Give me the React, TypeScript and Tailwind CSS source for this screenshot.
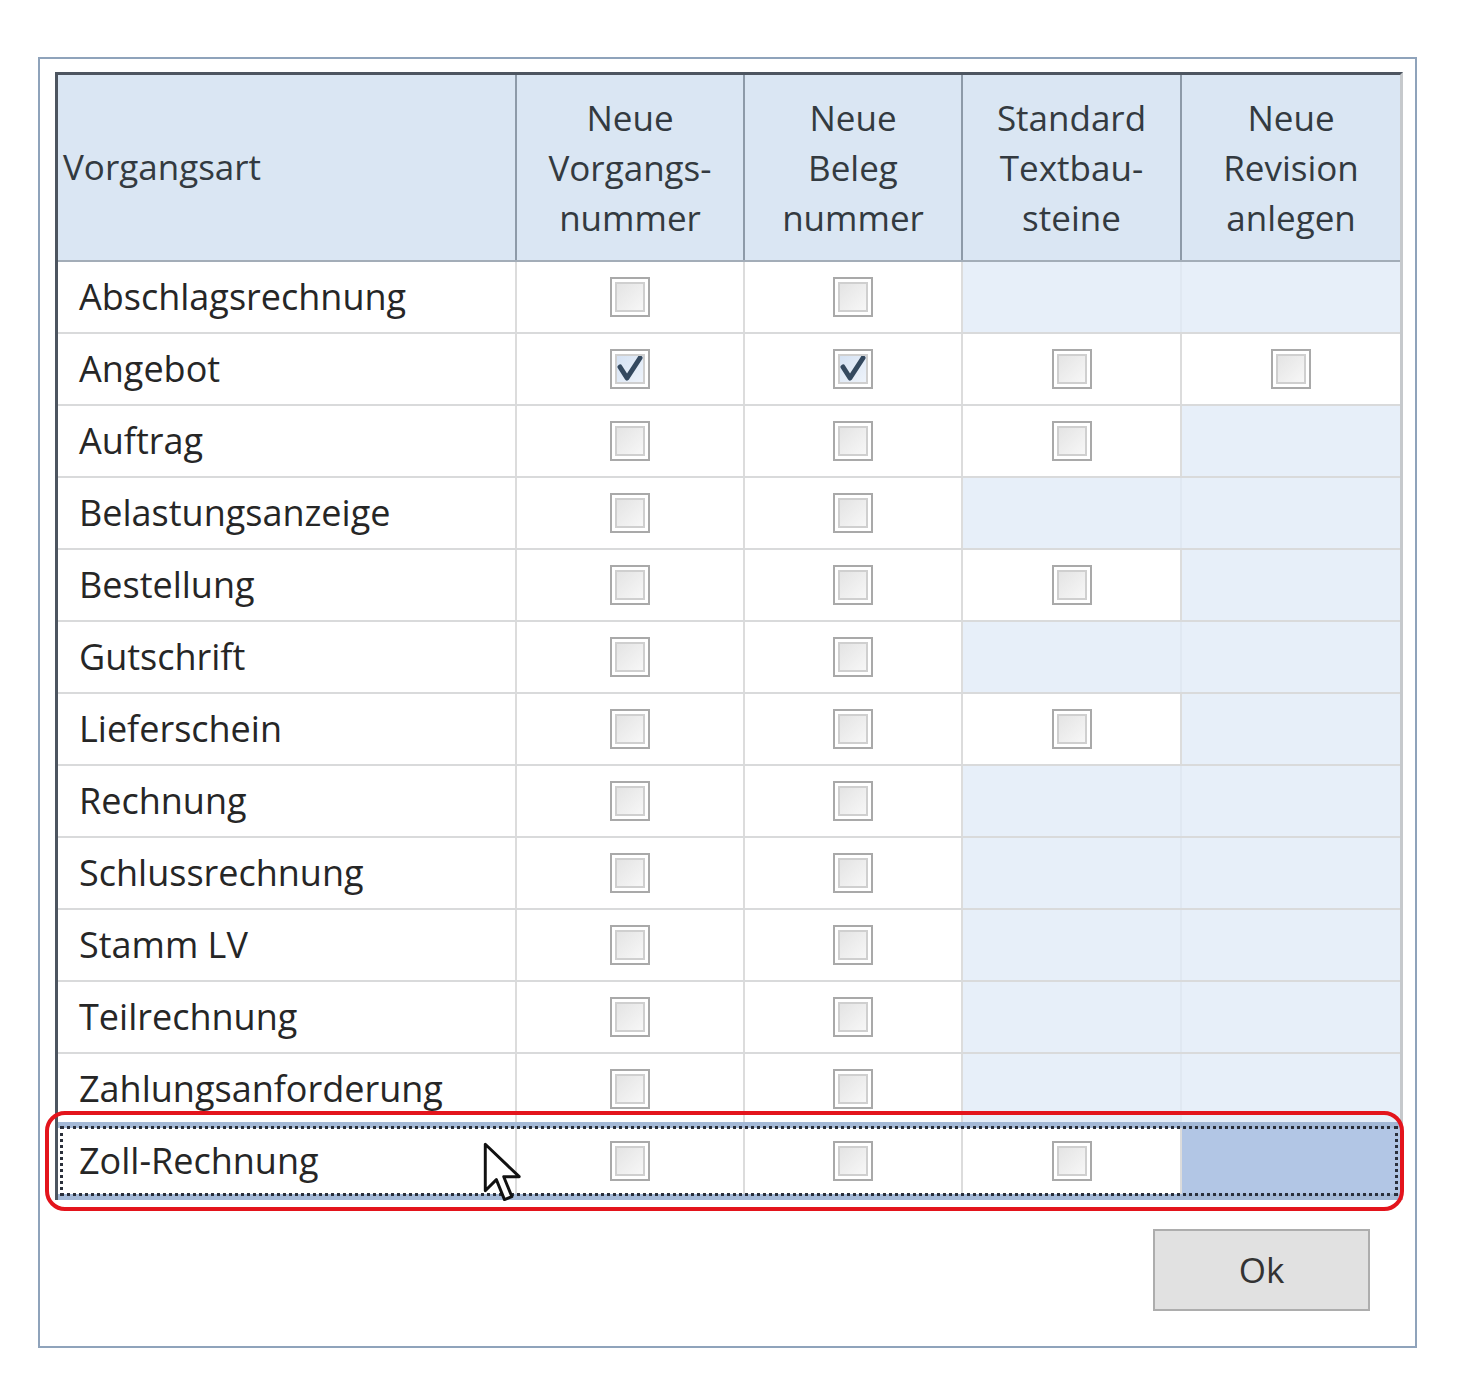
import React from 'react';

type Cell = 'off' | 'on' | 'na' | 'sel';

const ROWS: { name: string; cells: Cell[] }[] = [
  { name: 'Abschlagsrechnung', cells: ['off', 'off', 'na', 'na'] },
  { name: 'Angebot', cells: ['on', 'on', 'off', 'off'] },
  { name: 'Auftrag', cells: ['off', 'off', 'off', 'na'] },
  { name: 'Belastungsanzeige', cells: ['off', 'off', 'na', 'na'] },
  { name: 'Bestellung', cells: ['off', 'off', 'off', 'na'] },
  { name: 'Gutschrift', cells: ['off', 'off', 'na', 'na'] },
  { name: 'Lieferschein', cells: ['off', 'off', 'off', 'na'] },
  { name: 'Rechnung', cells: ['off', 'off', 'na', 'na'] },
  { name: 'Schlussrechnung', cells: ['off', 'off', 'na', 'na'] },
  { name: 'Stamm LV', cells: ['off', 'off', 'na', 'na'] },
  { name: 'Teilrechnung', cells: ['off', 'off', 'na', 'na'] },
  { name: 'Zahlungsanforderung', cells: ['off', 'off', 'na', 'na'] },
  { name: 'Zoll-Rechnung', cells: ['off', 'off', 'off', 'sel'] },
];

const HEADERS = [
  ['Neue', 'Vorgangs-', 'nummer'],
  ['Neue', 'Beleg', 'nummer'],
  ['Standard', 'Textbau-', 'steine'],
  ['Neue', 'Revision', 'anlegen'],
];

const COLS = 'grid grid-cols-[459px_228px_218px_219px_218px]';

function CheckBox({ checked }: { checked?: boolean }) {
  return (
    <div className="w-[40px] h-[40px] border-2 border-[#a9a9a9] p-[3px] bg-white">
      <div
        className={`w-full h-full border-2 border-[#cfcfcf] flex items-center justify-center ${
          checked ? 'bg-gradient-to-br from-[#d5e2f3] to-[#eef3fa]' : 'bg-gradient-to-br from-[#e4e4e4] to-[#f7f7f7]'
        }`}
      >
        {checked && (
          <svg width="26" height="26" viewBox="0 0 26 26">
            <path d="M3 11 L10 22 L23 2" fill="none" stroke="#34495f" strokeWidth="5" strokeLinejoin="round" strokeLinecap="round" />
          </svg>
        )}
      </div>
    </div>
  );
}

function Cursor() {
  return (
    <svg width="40" height="62" viewBox="0 0 27 42" className="absolute left-[425px] top-[14px]">
      <path
        d="M1.5 1.5 L1.5 33 L9 25.5 L14.5 39 L19.5 37 L14 23.5 L24.5 23.5 Z"
        fill="#ffffff"
        stroke="#111111"
        strokeWidth="2"
        strokeLinejoin="round"
      />
    </svg>
  );
}

export default function App() {
  return (
    <div className="w-[1468px] h-[1400px] bg-white font-['Open_Sans','Noto_Sans',sans-serif] pt-[57px] pl-[38px]">
      <div className="w-[1379px] h-[1291px] border-2 border-[#8fa3bb] bg-white pt-[13px] pl-[15px]">
        <div className="w-[1348px] border-l-[3px] border-t-[3px] border-r-[3px] border-l-[#4d5560] border-t-[#4d5560] border-r-[#c6c9cc]">
          {/* Header */}
          <div className={`${COLS} h-[187px] bg-[#dae6f3] border-b-2 border-[#a3adb8] text-[35px] text-[#333a40]`}>
            <div className="border-r-2 border-[#8d9aa8] flex items-center pl-[5px]">Vorgangsart</div>
            {HEADERS.map((lines, i) => (
              <div
                key={i}
                className={`flex flex-col items-center justify-center leading-[50px] ${i < 3 ? 'border-r-2 border-[#8d9aa8]' : ''}`}
              >
                {lines.map((l) => (
                  <span key={l}>{l}</span>
                ))}
              </div>
            ))}
          </div>

          {/* Rows */}
          {ROWS.map((row) => {
            const selected = row.name === 'Zoll-Rechnung';
            return (
              <div
                key={row.name}
                className={`${COLS} relative text-[36px] text-[#262626] ${
                  selected ? 'border-y-[6px] border-[#a3b8d6] h-[78px] -mt-[4px]' : 'h-[72px] border-b-2 border-[#d9dadb]'
                }`}
              >
                <div className="border-r-2 border-[#dcdcdc] flex items-center pl-[21px] bg-white">{row.name}</div>
                {row.cells.map((c, i) => (
                  <div
                    key={i}
                    className={`flex items-center justify-center ${
                      c === 'na' ? 'bg-[#e7eff9]' : c === 'sel' ? 'bg-[#b2c6e5]' : 'bg-white'
                    } ${i < 3 ? (c === 'na' && row.cells[i + 1] === 'na' ? 'border-r-2 border-[#e0e8f2]' : 'border-r-2 border-[#dcdcdc]') : ''}`}
                  >
                    {(c === 'off' || c === 'on') && <CheckBox checked={c === 'on'} />}
                  </div>
                ))}
                {selected && (
                  <>
                    <div className="absolute left-[2px] right-[2px] -top-[2px] -bottom-[2px] border-[3px] border-dotted border-[#2a2f3a] pointer-events-none" />
                    <div className="absolute -left-[13px] -right-[4px] -top-[17px] -bottom-[17px] border-[4px] border-[#e3141c] rounded-[20px] pointer-events-none" />
                    <Cursor />
                  </>
                )}
              </div>
            );
          })}
        </div>

        <div className="flex justify-end pr-[45px] mt-[29px]">
          <button className="w-[217px] h-[82px] border-2 border-[#adadad] bg-[#e1e1e1] text-[35px] text-[#333]">
            Ok
          </button>
        </div>
      </div>
    </div>
  );
}
